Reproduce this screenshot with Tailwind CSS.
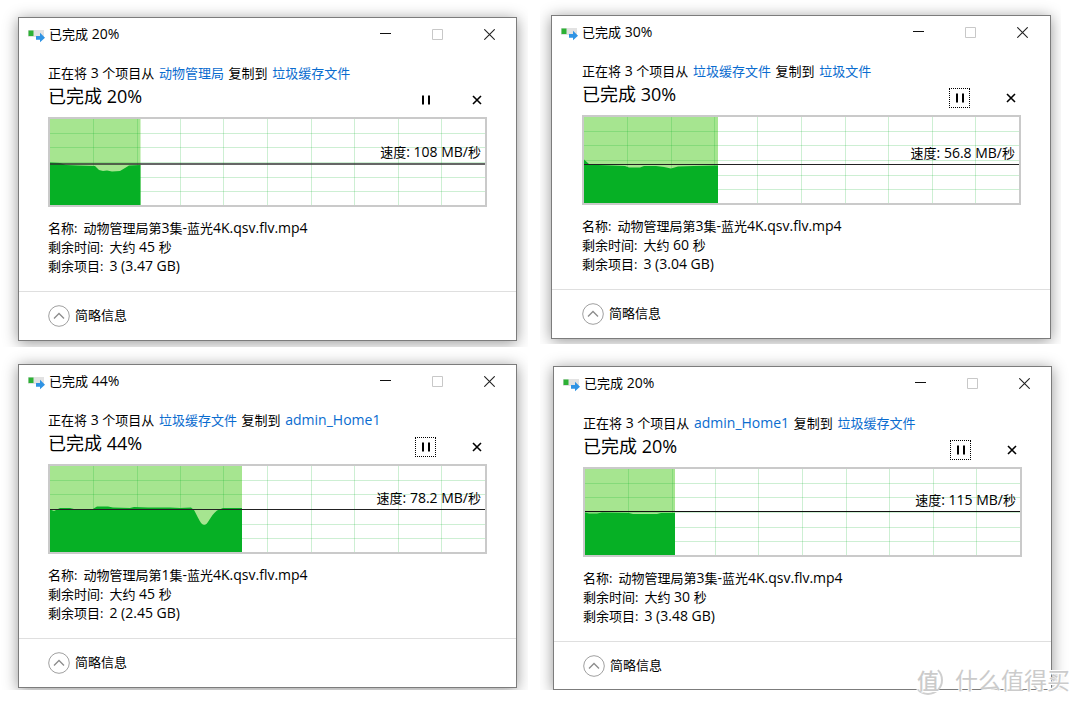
<!DOCTYPE html>
<html lang="zh-CN">
<head>
<meta charset="utf-8">
<meta name="viewport" content="width=device-width, initial-scale=1">
<title>文件复制进度</title>
<script src="https://cdn.jsdelivr.net/npm/@tailwindcss/browser@4"></script>
</head>
<body class="relative min-h-screen overflow-x-hidden bg-white font-['Open_Sans','Noto_Sans_CJK_SC',sans-serif] text-[13px] text-black">

<svg class="hidden" aria-hidden="true">
  <symbol id="copy" viewBox="0 0 17 14">
    <rect x="0" y="1" width="16" height="7" fill="#e2e2e2"/>
    <rect x="0.5" y="1.500" width="5" height="5.500" fill="#2db135"/>
    <path d="M8 7h4V3.800L17 8.800L12 13.300V10.800H8Z" fill="#2f93e4"/>
  </symbol>
  <symbol id="min" viewBox="0 0 11 11"><path d="M0 4.500h11" stroke="#111" fill="none"/></symbol>
  <symbol id="max" viewBox="0 0 11 11"><path d="M.5.5h10v10H.5z" stroke="#c8c8c8" fill="none"/></symbol>
  <symbol id="close" viewBox="0 0 11 11"><path d="M.3.300l10.400 10.400M10.700.300L.300 10.700" stroke="#222" stroke-width="1.100" fill="none"/></symbol>
  <symbol id="pause" viewBox="0 0 10 10"><path d="M2 .500v9M8 .500v9" stroke="#000" stroke-width="2" fill="none"/></symbol>
  <symbol id="cancel" viewBox="0 0 10 10"><path d="M1 1l8 8M9 1l-8 8" stroke="#000" stroke-width="1.600" fill="none"/></symbol>
  <symbol id="less" viewBox="0 0 22 22"><circle cx="11" cy="11" r="10.300" stroke="#a0a0a0" fill="none"/><path d="M6 13.500l5-5 5 5" stroke="#8c8c8c" stroke-width="1.300" fill="none"/></symbol>
  <symbol id="grid" viewBox="0 0 435 86" preserveAspectRatio="none">
    <path d="M43.500 0v86M87.500 0v86M130.500 0v86M173.500 0v86M217.500 0v86M261.500 0v86M304.500 0v86M348.500 0v86M391.500 0v86M0 14.500h435M0 28.500h435M0 43.500h435M0 58.500h435M0 72.500h435" stroke="#06b025" stroke-opacity=".2" fill="none"/>
  </symbol>
</svg>

<main class="grid grid-cols-2">
  <div class="mr-3">
    <div class="overflow-hidden pt-[17px] pr-[11px] pb-[6px] pl-[18px]">
      <section class="border border-[#7c7c7c] bg-white shadow-[0_2px_14px_rgba(0,0,0,0.42)]">
        <header class="flex h-8 items-center pr-px pl-[9px]">
          <svg class="mt-1 h-[14px] w-[17px]"><use href="#copy"/></svg>
          <h2 class="ml-1 flex-1">已完成<span class="text-[14px]"> 20%</span></h2>
          <button class="flex h-8 w-[52px] items-center justify-center" aria-label="最小化"><svg class="size-[11px]"><use href="#min"/></svg></button>
          <button class="flex h-8 w-[52px] items-center justify-center" aria-label="最大化" disabled><svg class="size-[11px]"><use href="#max"/></svg></button>
          <button class="flex h-8 w-[52px] items-center justify-center" aria-label="关闭"><svg class="size-[11px]"><use href="#close"/></svg></button>
        </header>
        <div class="px-[29px] pt-[13px] pb-4">
          <p class="h-5 leading-5">正在将<span class="text-[14px]"> 3 </span>个项目从<span class="text-[14px]"> </span><a href="#" class="mx-px text-[#0a6ccf]">动物管理局</a><span class="text-[14px]"> </span>复制到<span class="text-[14px]"> </span><a href="#" class="mx-px text-[#0a6ccf]">垃圾缓存文件</a></p>
          <div class="flex items-end">
            <p class="flex-1 text-[18px] leading-[27px]">已完成 20%</p>
            <button class="mr-[30px] flex h-5 w-[21px] items-center justify-center" aria-label="暂停"><svg class="size-[10px]"><use href="#pause"/></svg></button>
            <button class="flex h-5 w-[21px] items-center justify-center" aria-label="取消"><svg class="size-[10px]"><use href="#cancel"/></svg></button>
          </div>
          <div class="relative mt-[7px] h-[90px] border-2 border-[#cacaca]">
            <svg class="h-full w-full" viewBox="0 0 435 86" preserveAspectRatio="none">
              <rect width="90.500" height="86" fill="#a6e590"/>
              <use href="#grid" width="435" height="86"/>
              <path d="M0 86V43.500L10 44L16 46L28 46.500L45 47L49 51L53 52L57 51.500L62 52.500L70 52L75 49L79 46.500L90.500 46V86Z" fill="#06b025"/>
              <path d="M0 45h435" stroke="#333" stroke-width="1.400"/>
            </svg>
            <p class="absolute top-[23px] right-1 leading-5">速度<span class="text-[14px]">: 108 MB/</span>秒</p>
          </div>
          <dl class="mt-[11px] leading-[19px]">
            <div class="flex h-[19px] items-baseline gap-[6px]"><dt>名称:</dt><dd>动物管理局第<span class="text-[14px]">3</span>集<span class="text-[14px]">-</span>蓝光<span class="text-[14px]">4K.qsv.flv.mp4</span></dd></div>
            <div class="flex h-[19px] items-baseline gap-[6px]"><dt>剩余时间:</dt><dd>大约<span class="text-[14px]"> 45 </span>秒</dd></div>
            <div class="flex h-[19px] items-baseline gap-[6px]"><dt>剩余项目:</dt><dd class="text-[14px]">3 (3.47 GB)</dd></div>
          </dl>
        </div>
        <footer class="flex h-[49px] items-center border-t border-[#dfdfdf] px-[29px]">
          <button class="flex items-center gap-[5px]"><svg class="size-[22px]"><use href="#less"/></svg>简略信息</button>
        </footer>
      </section>
    </div>

    <div class="overflow-hidden pt-[17px] pr-[11px] pb-[2px] pl-[18px]">
      <section class="border border-[#7c7c7c] bg-white shadow-[0_2px_14px_rgba(0,0,0,0.42)]">
        <header class="flex h-8 items-center pr-px pl-[9px]">
          <svg class="mt-1 h-[14px] w-[17px]"><use href="#copy"/></svg>
          <h2 class="ml-1 flex-1">已完成<span class="text-[14px]"> 44%</span></h2>
          <button class="flex h-8 w-[52px] items-center justify-center" aria-label="最小化"><svg class="size-[11px]"><use href="#min"/></svg></button>
          <button class="flex h-8 w-[52px] items-center justify-center" aria-label="最大化" disabled><svg class="size-[11px]"><use href="#max"/></svg></button>
          <button class="flex h-8 w-[52px] items-center justify-center" aria-label="关闭"><svg class="size-[11px]"><use href="#close"/></svg></button>
        </header>
        <div class="px-[29px] pt-[13px] pb-4">
          <p class="h-5 leading-5">正在将<span class="text-[14px]"> 3 </span>个项目从<span class="text-[14px]"> </span><a href="#" class="mx-px text-[#0a6ccf]">垃圾缓存文件</a><span class="text-[14px]"> </span>复制到<span class="text-[14px]"> </span><a href="#" class="mx-px text-[14px] text-[#0a6ccf]">admin_Home1</a></p>
          <div class="flex items-end">
            <p class="flex-1 text-[18px] leading-[27px]">已完成 44%</p>
            <button class="mr-[30px] flex h-5 w-[21px] items-center justify-center border border-dotted border-black" aria-label="暂停"><svg class="size-[10px]"><use href="#pause"/></svg></button>
            <button class="flex h-5 w-[21px] items-center justify-center" aria-label="取消"><svg class="size-[10px]"><use href="#cancel"/></svg></button>
          </div>
          <div class="relative mt-[7px] h-[90px] border-2 border-[#cacaca]">
            <svg class="h-full w-full" viewBox="0 0 435 86" preserveAspectRatio="none">
              <rect width="192" height="86" fill="#a6e590"/>
              <use href="#grid" width="435" height="86"/>
              <path d="M0 86V43.500L4 45L10 42L20 42L26 43.500L42 43.500L47 40.500L58 40.500L63 41.500L80 42L84 41L98 41.500L120 41.500L130 42L141 41.500L144 44C149 53 151 59 154.500 59S160 50 167 44.500L173 42L192 42V86Z" fill="#06b025"/>
              <path d="M0 43.500h435" stroke="#222" stroke-width="1.200"/>
            </svg>
            <p class="absolute top-[22px] right-1 leading-5">速度<span class="text-[14px]">: 78.2 MB/</span>秒</p>
          </div>
          <dl class="mt-[11px] leading-[19px]">
            <div class="flex h-[19px] items-baseline gap-[6px]"><dt>名称:</dt><dd>动物管理局第<span class="text-[14px]">1</span>集<span class="text-[14px]">-</span>蓝光<span class="text-[14px]">4K.qsv.flv.mp4</span></dd></div>
            <div class="flex h-[19px] items-baseline gap-[6px]"><dt>剩余时间:</dt><dd>大约<span class="text-[14px]"> 45 </span>秒</dd></div>
            <div class="flex h-[19px] items-baseline gap-[6px]"><dt>剩余项目:</dt><dd class="text-[14px]">2 (2.45 GB)</dd></div>
          </dl>
        </div>
        <footer class="flex h-[49px] items-center border-t border-[#dfdfdf] px-[29px]">
          <button class="flex items-center gap-[5px]"><svg class="size-[22px]"><use href="#less"/></svg>简略信息</button>
        </footer>
      </section>
    </div>
  </div>

  <div>
    <div class="mr-[19px] overflow-hidden pt-[15px] pr-[10px] pb-[5px] pl-[11px]">
      <section class="border border-[#7c7c7c] bg-white shadow-[0_2px_14px_rgba(0,0,0,0.42)]">
        <header class="flex h-8 items-center pr-[2px] pl-[9px]">
          <svg class="mt-1 h-[14px] w-[17px]"><use href="#copy"/></svg>
          <h2 class="ml-1 flex-1">已完成<span class="text-[14px]"> 30%</span></h2>
          <button class="flex h-8 w-[52px] items-center justify-center" aria-label="最小化"><svg class="size-[11px]"><use href="#min"/></svg></button>
          <button class="flex h-8 w-[52px] items-center justify-center" aria-label="最大化" disabled><svg class="size-[11px]"><use href="#max"/></svg></button>
          <button class="flex h-8 w-[52px] items-center justify-center" aria-label="关闭"><svg class="size-[11px]"><use href="#close"/></svg></button>
        </header>
        <div class="pt-[13px] pr-[29px] pb-4 pl-[30px]">
          <p class="h-5 leading-5">正在将<span class="text-[14px]"> 3 </span>个项目从<span class="text-[14px]"> </span><a href="#" class="mx-px text-[#0a6ccf]">垃圾缓存文件</a><span class="text-[14px]"> </span>复制到<span class="text-[14px]"> </span><a href="#" class="mx-px text-[#0a6ccf]">垃圾文件</a></p>
          <div class="flex items-end">
            <p class="flex-1 text-[18px] leading-[27px]">已完成 30%</p>
            <button class="mr-[30px] flex h-5 w-[21px] items-center justify-center border border-dotted border-black" aria-label="暂停"><svg class="size-[10px]"><use href="#pause"/></svg></button>
            <button class="flex h-5 w-[21px] items-center justify-center" aria-label="取消"><svg class="size-[10px]"><use href="#cancel"/></svg></button>
          </div>
          <div class="relative mt-[7px] h-[90px] border-2 border-[#cacaca]">
            <svg class="h-full w-full" viewBox="0 0 435 86" preserveAspectRatio="none">
              <rect width="134" height="86" fill="#a6e590"/>
              <use href="#grid" width="435" height="86"/>
              <path d="M0 86V42.500L5 47L14 48L28 48.500L41 49L45 50.500L56 50.500L60 49L72 49L80 50L87 51.500L94 49.500L110 49L134 48.500V86Z" fill="#06b025"/>
              <path d="M0 47.500h435" stroke="#222" stroke-width="1.200"/>
            </svg>
            <p class="absolute top-[26px] right-1 leading-5">速度<span class="text-[14px]">: 56.8 MB/</span>秒</p>
          </div>
          <dl class="mt-[11px] leading-[19px]">
            <div class="flex h-[19px] items-baseline gap-[6px]"><dt>名称:</dt><dd>动物管理局第<span class="text-[14px]">3</span>集<span class="text-[14px]">-</span>蓝光<span class="text-[14px]">4K.qsv.flv.mp4</span></dd></div>
            <div class="flex h-[19px] items-baseline gap-[6px]"><dt>剩余时间:</dt><dd>大约<span class="text-[14px]"> 60 </span>秒</dd></div>
            <div class="flex h-[19px] items-baseline gap-[6px]"><dt>剩余项目:</dt><dd class="text-[14px]">3 (3.04 GB)</dd></div>
          </dl>
        </div>
        <footer class="flex h-[49px] items-center border-t border-[#dfdfdf] px-[30px]">
          <button class="flex items-center gap-[5px]"><svg class="size-[22px]"><use href="#less"/></svg>简略信息</button>
        </footer>
      </section>
    </div>

    <div class="overflow-hidden pt-[22px] pr-[28px] pl-[13px]">
      <section class="border border-[#7c7c7c] bg-white shadow-[0_2px_14px_rgba(0,0,0,0.42)]">
        <header class="flex h-8 items-center pr-px pl-[9px]">
          <svg class="mt-1 h-[14px] w-[17px]"><use href="#copy"/></svg>
          <h2 class="ml-1 flex-1">已完成<span class="text-[14px]"> 20%</span></h2>
          <button class="flex h-8 w-[52px] items-center justify-center" aria-label="最小化"><svg class="size-[11px]"><use href="#min"/></svg></button>
          <button class="flex h-8 w-[52px] items-center justify-center" aria-label="最大化" disabled><svg class="size-[11px]"><use href="#max"/></svg></button>
          <button class="flex h-8 w-[52px] items-center justify-center" aria-label="关闭"><svg class="size-[11px]"><use href="#close"/></svg></button>
        </header>
        <div class="px-[29px] pt-[14px] pb-4">
          <p class="h-5 leading-5">正在将<span class="text-[14px]"> 3 </span>个项目从<span class="text-[14px]"> </span><a href="#" class="mx-px text-[14px] text-[#0a6ccf]">admin_Home1</a><span class="text-[14px]"> </span>复制到<span class="text-[14px]"> </span><a href="#" class="mx-px text-[#0a6ccf]">垃圾缓存文件</a></p>
          <div class="flex items-end">
            <p class="flex-1 text-[18px] leading-[27px]">已完成 20%</p>
            <button class="mr-[30px] flex h-5 w-[21px] items-center justify-center border border-dotted border-black" aria-label="暂停"><svg class="size-[10px]"><use href="#pause"/></svg></button>
            <button class="flex h-5 w-[21px] items-center justify-center" aria-label="取消"><svg class="size-[10px]"><use href="#cancel"/></svg></button>
          </div>
          <div class="relative mt-[7px] h-[90px] border-2 border-[#cacaca]">
            <svg class="h-full w-full" viewBox="0 0 435 86" preserveAspectRatio="none">
              <rect width="90" height="86" fill="#a6e590"/>
              <use href="#grid" width="435" height="86"/>
              <path d="M0 86V43.500L4 44.500L12 44.500L17 43.500L44 44L48 45L72 45L76 44L90 44V86Z" fill="#06b025"/>
              <path d="M0 42.500h435" stroke="#111" stroke-width="1.200"/>
            </svg>
            <p class="absolute top-[21px] right-1 leading-5">速度<span class="text-[14px]">: 115 MB/</span>秒</p>
          </div>
          <dl class="mt-[11px] leading-[19px]">
            <div class="flex h-[19px] items-baseline gap-[6px]"><dt>名称:</dt><dd>动物管理局第<span class="text-[14px]">3</span>集<span class="text-[14px]">-</span>蓝光<span class="text-[14px]">4K.qsv.flv.mp4</span></dd></div>
            <div class="flex h-[19px] items-baseline gap-[6px]"><dt>剩余时间:</dt><dd>大约<span class="text-[14px]"> 30 </span>秒</dd></div>
            <div class="flex h-[19px] items-baseline gap-[6px]"><dt>剩余项目:</dt><dd class="text-[14px]">3 (3.48 GB)</dd></div>
          </dl>
        </div>
        <footer class="flex h-12 items-center border-t border-[#dfdfdf] px-[29px]">
          <button class="flex items-center gap-[5px]"><svg class="size-[22px]"><use href="#less"/></svg>简略信息</button>
        </footer>
      </section>
    </div>
  </div>
</main>

<div class="absolute right-[10px] bottom-[9px] flex items-center gap-3 text-[#cbcbcb] [text-shadow:-1px_-1px_0_white,1px_1px_0_white]">
  <span class="flex size-[30px] items-center justify-center rounded-full border-2 border-transparent border-r-[#cfcfcf] border-b-[#cfcfcf] bg-white/80 text-[22px] leading-none font-medium">值</span>
  <span class="text-[23px] leading-[32px]">什么值得买</span>
</div>
</body>
</html>
